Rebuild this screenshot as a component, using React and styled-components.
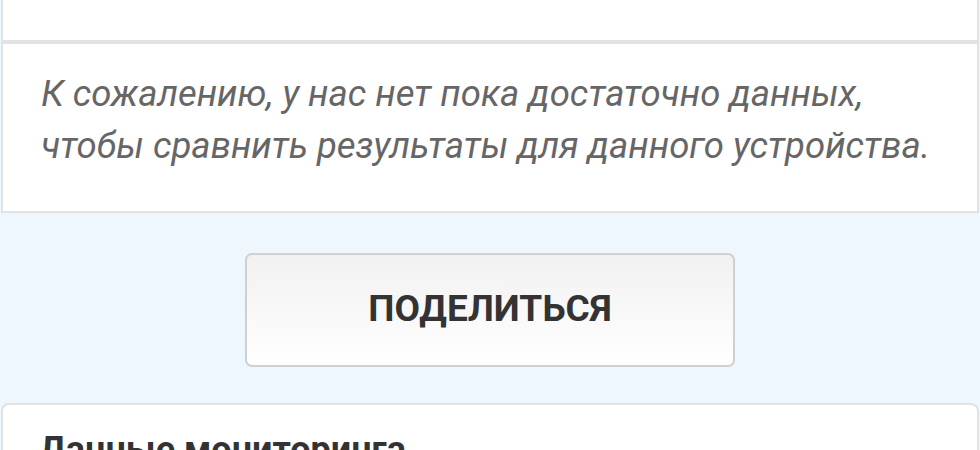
import React from "react";
import styled, { createGlobalStyle } from "styled-components";

const GlobalStyle = createGlobalStyle`
  html, body {
    margin: 0;
    padding: 0;
    background: #eef6fe;
    font-family: Roboto, "Liberation Sans", sans-serif;
    overflow: hidden;
  }
`;

const Page = styled.div`
  display: flex;
  flex-direction: column;
  padding: 0 1px;
`;

const Card = styled.div`
  box-sizing: border-box;
  background: #fff;
  border: 2px solid #e2e2e2;
  border-radius: ${p => (p.rounded ? "8px 8px 0 0" : "0")};
`;

const TopCard = styled(Card)`
  height: 42px;
  border-top: none;
`;

const NoticeCard = styled(Card)`
  height: 171px;
  padding: 24px 0 0 38px;
`;

const Notice = styled.p`
  margin: 0;
  font-style: italic;
  font-size: 36.5px;
  line-height: 52px;
  color: #666;
`;

const ShareRow = styled.div`
  display: flex;
  justify-content: center;
  padding: 40px 0 36px;
`;

const ShareButton = styled.button`
  width: 490px;
  height: 114px;
  padding: 0 0 4px;
  border: 2px solid #d0d0d0;
  border-radius: 7px;
  background: linear-gradient(to bottom, #f1f1f1, #ffffff);
  font-family: Roboto, "Liberation Sans", sans-serif;
  font-weight: 700;
  font-size: 37px;
  color: #333;
  cursor: pointer;
`;

const MonitorCard = styled(Card)`
  height: 80px;
  padding: 24px 0 0 36px;
`;

const Heading = styled.h2`
  margin: 0;
  font-size: 36px;
  font-weight: 700;
  color: #333;
`;

export default function App() {
  return (
    <Page>
      <GlobalStyle />
      <TopCard />
      <NoticeCard>
        <Notice>
          К сожалению, у нас нет пока достаточно данных,
          <br />
          чтобы сравнить результаты для данного устройства.
        </Notice>
      </NoticeCard>
      <ShareRow>
        <ShareButton>ПОДЕЛИТЬСЯ</ShareButton>
      </ShareRow>
      <MonitorCard rounded>
        <Heading>Данные мониторинга</Heading>
      </MonitorCard>
    </Page>
  );
}
